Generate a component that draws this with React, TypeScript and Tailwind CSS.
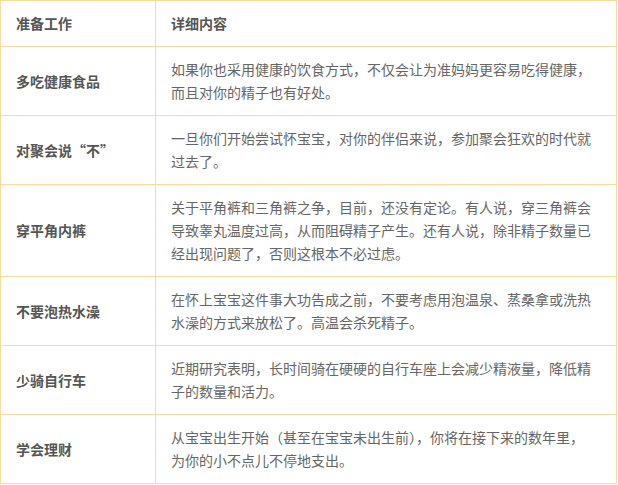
import React from "react";

const rows: { title: string; lines: string[] }[] = [
  {
    title: "多吃健康食品",
    lines: ["如果你也采用健康的饮食方式，不仅会让为准妈妈更容易吃得健康，", "而且对你的精子也有好处。"],
  },
  {
    title: "对聚会说“不”",
    lines: ["一旦你们开始尝试怀宝宝，对你的伴侣来说，参加聚会狂欢的时代就", "过去了。"],
  },
  {
    title: "穿平角内裤",
    lines: [
      "关于平角裤和三角裤之争，目前，还没有定论。有人说，穿三角裤会",
      "导致睾丸温度过高，从而阻碍精子产生。还有人说，除非精子数量已",
      "经出现问题了，否则这根本不必过虑。",
    ],
  },
  {
    title: "不要泡热水澡",
    lines: ["在怀上宝宝这件事大功告成之前，不要考虑用泡温泉、蒸桑拿或洗热", "水澡的方式来放松了。高温会杀死精子。"],
  },
  {
    title: "少骑自行车",
    lines: ["近期研究表明，长时间骑在硬硬的自行车座上会减少精液量，降低精", "子的数量和活力。"],
  },
  {
    title: "学会理财",
    lines: ["从宝宝出生开始（甚至在宝宝未出生前），你将在接下来的数年里，", "为你的小不点儿不停地支出。"],
  },
];

export default function App() {
  return (
    <div
      className="bg-white w-[618px] h-[485px]"
      style={{ fontFamily: '"Noto Sans CJK SC", "Noto Sans", sans-serif' }}
    >
      <div className="w-[617px] border border-[#f7dba0] text-[14px] leading-[23px]">
        <div className="flex border-b border-[#f7dba0]">
          <div className="w-[155px] shrink-0 border-r border-[#f7dba0] pl-[15px] py-[11px] font-bold text-[#555]">
            准备工作
          </div>
          <div className="flex-1 pl-[15px] py-[11px] font-bold text-[#555]">详细内容</div>
        </div>
        {rows.map((r, i) => (
          <div
            key={i}
            className={i < rows.length - 1 ? "flex border-b border-[#f7dba0]" : "flex"}
          >
            <div className="w-[155px] shrink-0 border-r border-[#f7dba0] pl-[15px] py-[11px] font-bold text-[#555] flex items-center">
              {r.title}
            </div>
            <div className="flex-1 pl-[15px] py-[11px] text-[#666] whitespace-nowrap">
              {r.lines.map((l, j) => (
                <div key={j}>{l}</div>
              ))}
            </div>
          </div>
        ))}
      </div>
    </div>
  );
}
